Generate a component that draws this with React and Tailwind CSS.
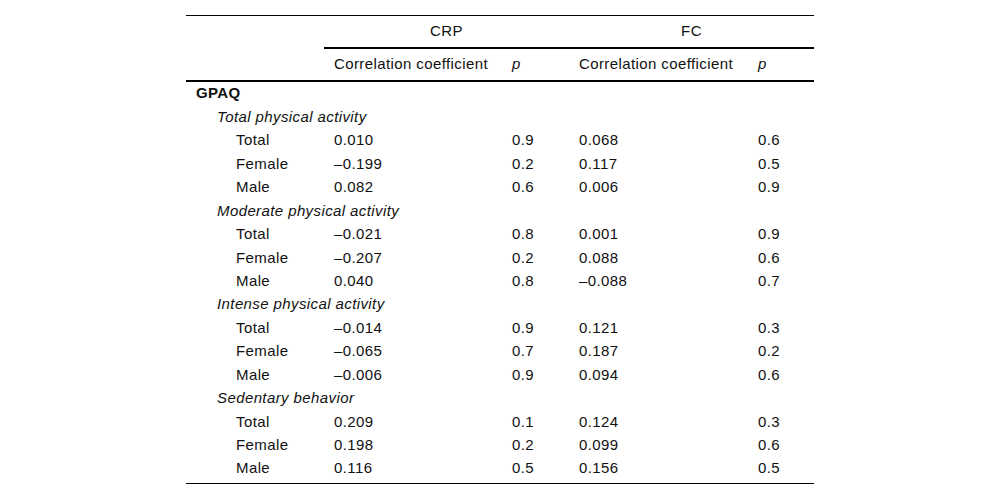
const groups = [
  {
    title: 'Total physical activity',
    rows: [
      ['Total', '0.010', '0.9', '0.068', '0.6'],
      ['Female', '\u20130.199', '0.2', '0.117', '0.5'],
      ['Male', '0.082', '0.6', '0.006', '0.9'],
    ],
  },
  {
    title: 'Moderate physical activity',
    rows: [
      ['Total', '\u20130.021', '0.8', '0.001', '0.9'],
      ['Female', '\u20130.207', '0.2', '0.088', '0.6'],
      ['Male', '0.040', '0.8', '\u20130.088', '0.7'],
    ],
  },
  {
    title: 'Intense physical activity',
    rows: [
      ['Total', '\u20130.014', '0.9', '0.121', '0.3'],
      ['Female', '\u20130.065', '0.7', '0.187', '0.2'],
      ['Male', '\u20130.006', '0.9', '0.094', '0.6'],
    ],
  },
  {
    title: 'Sedentary behavior',
    rows: [
      ['Total', '0.209', '0.1', '0.124', '0.3'],
      ['Female', '0.198', '0.2', '0.099', '0.6'],
      ['Male', '0.116', '0.5', '0.156', '0.5'],
    ],
  },
];

const cols = 'grid grid-cols-[138px_178px_67px_179px_66px]';

export default function App() {
  return (
    <div className="min-h-screen bg-white pt-[15px] text-[15px] tracking-[0.4px] text-[#111] font-['Liberation_Sans',Arial,sans-serif]">
      <div className="w-[628px] mx-auto border-t border-black border-b pb-[3px]">
        {/* header */}
        <div className={`${cols} h-[33px]`}>
          <div />
          <div className="col-span-2 border-b-2 border-black flex items-center justify-center">CRP</div>
          <div className="col-span-2 border-b-2 border-black flex items-center justify-center">FC</div>
        </div>
        <div className={`${cols} h-[33px] border-b-2 border-black items-center`}>
          <div />
          <div className="pl-[10px]">Correlation coefficient</div>
          <div className="pl-[10px] italic">p</div>
          <div className="pl-[10px]">Correlation coefficient</div>
          <div className="pl-[10px] italic">p</div>
        </div>

        {/* body */}
        <div className={`${cols} h-[23.45px] items-center`}>
          <div className="pl-[10px] font-bold">GPAQ</div>
        </div>
        {groups.map((g) => (
          <div key={g.title}>
            <div className={`${cols} h-[23.45px] items-center`}>
              <div className="col-span-5 pl-[31px] italic">{g.title}</div>
            </div>
            {g.rows.map((r) => (
              <div key={r[0]} className={`${cols} h-[23.45px] items-center`}>
                <div className="pl-[50px]">{r[0]}</div>
                <div className="pl-[10px]">{r[1]}</div>
                <div className="pl-[10px]">{r[2]}</div>
                <div className="pl-[10px]">{r[3]}</div>
                <div className="pl-[10px]">{r[4]}</div>
              </div>
            ))}
          </div>
        ))}
      </div>
    </div>
  );
}
